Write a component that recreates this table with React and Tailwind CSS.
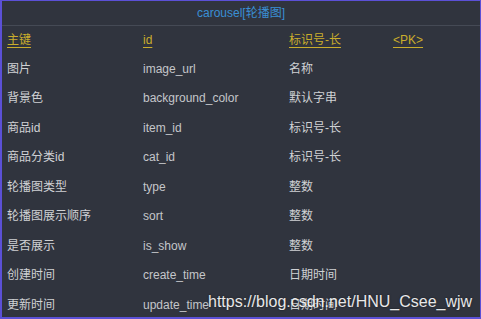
import React from "react";

const rows = [
  ["图片", "image_url", "名称"],
  ["背景色", "background_color", "默认字串"],
  ["商品id", "item_id", "标识号-长"],
  ["商品分类id", "cat_id", "标识号-长"],
  ["轮播图类型", "type", "整数"],
  ["轮播图展示顺序", "sort", "整数"],
  ["是否展示", "is_show", "整数"],
  ["创建时间", "create_time", "日期时间"],
  ["更新时间", "update_time", "日期时间"],
];

const font = { fontFamily: '"Liberation Sans", "Noto Sans CJK SC", sans-serif' };

export default function App() {
  return (
    <div
      className="relative w-[481px] h-[319px] overflow-hidden bg-[#30343e] border-l-2 border-t border-r border-b-2 border-[#5b50d6] text-[12px]"
      style={font}
    >
      {/* title */}
      <div className="h-[25px] flex items-center justify-center border-b border-[#454a55] text-[#3a8fd4]">
        carousel[轮播图]
      </div>

      {/* header */}
      <div className="grid grid-cols-[136px_146px_104px_1fr] pl-[5px] h-[28px] items-center text-[#c9ad2c]">
        <span className="underline underline-offset-[3px]">主键</span>
        <span className="underline underline-offset-[3px]">id</span>
        <span className="underline underline-offset-[3px]">标识号-长</span>
        <span className="underline underline-offset-[3px]">&lt;PK&gt;</span>
      </div>

      {rows.map((r, i) => (
        <div
          key={i}
          className="grid grid-cols-[136px_146px_104px_1fr] pl-[5px] h-[29.5px] items-center text-[#cfd1d4]"
        >
          <span>{r[0]}</span>
          <span className="text-[#c4c6ca]">{r[1]}</span>
          <span>{r[2]}</span>
          <span></span>
        </div>
      ))}

      {/* watermark */}
      <div className="absolute left-[206px] top-[289px] text-[16px] text-white/90 whitespace-nowrap [text-shadow:0_0_2px_rgba(0,0,0,0.6)]">
        https://blog.csdn.net/HNU_Csee_wjw
      </div>
    </div>
  );
}
